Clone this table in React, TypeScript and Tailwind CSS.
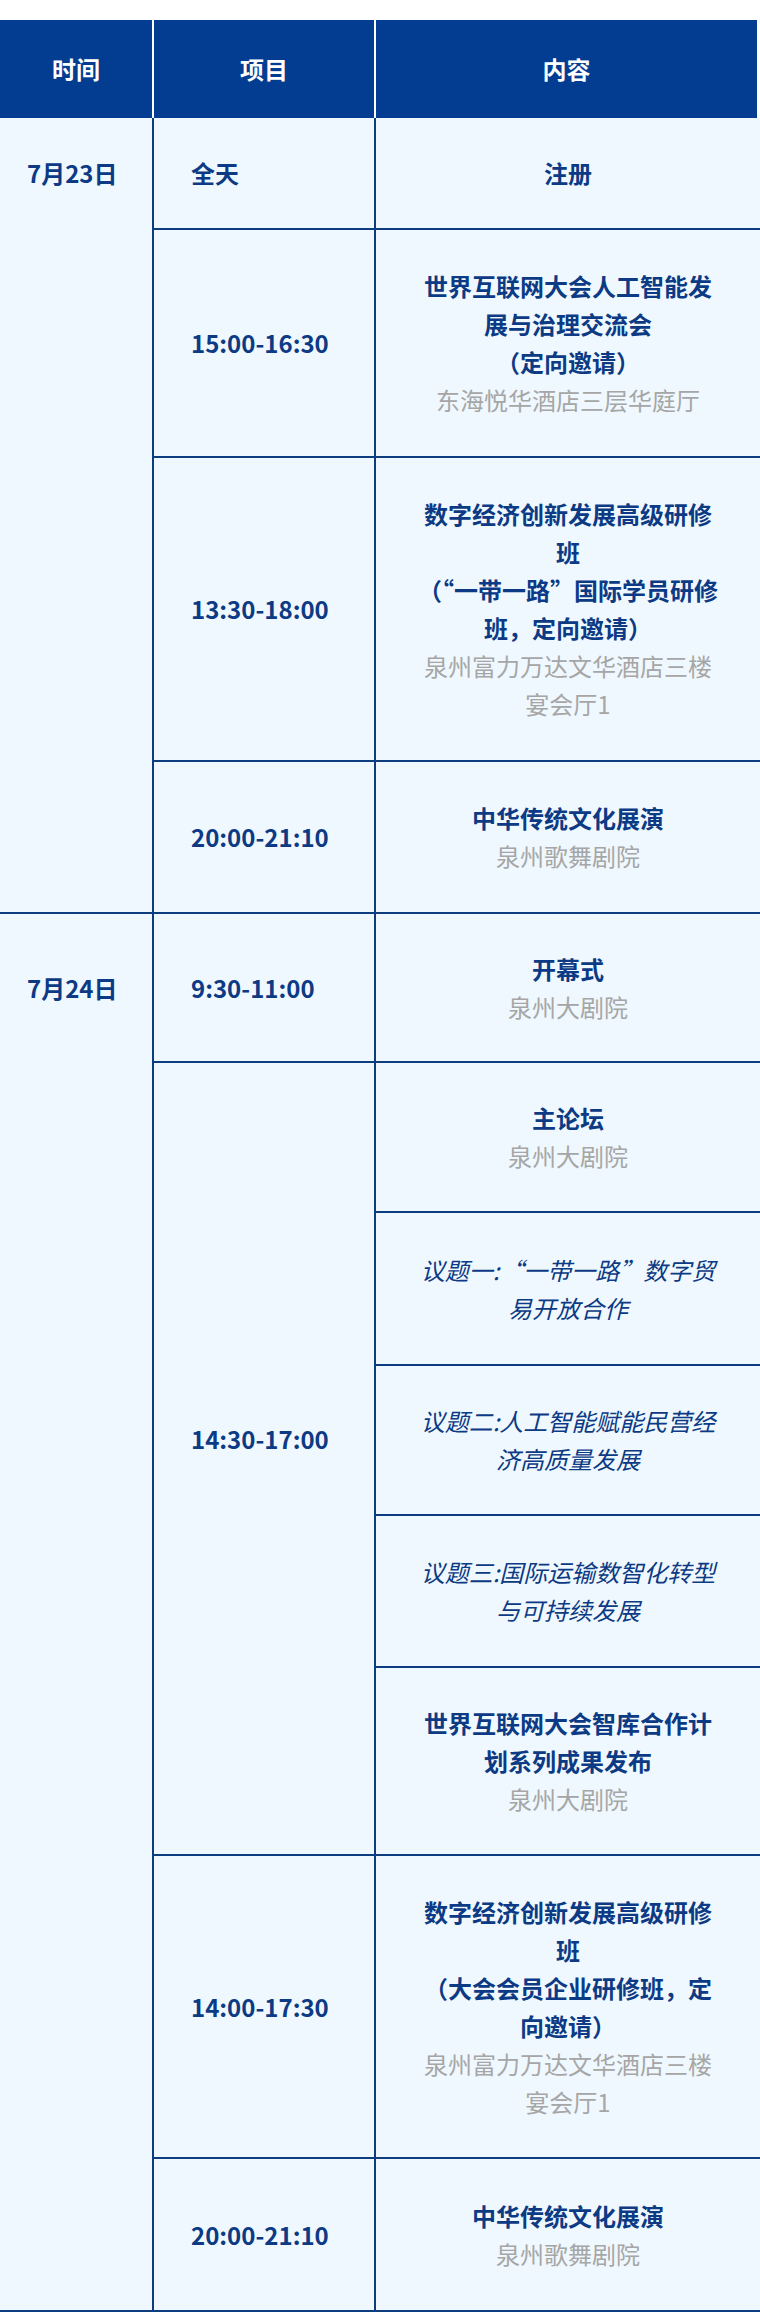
import React from "react";

type Kind = "b" | "g" | "i";
type Line = [Kind, string];

interface Sub {
  h: number;
  lines: Line[];
}

interface Row {
  h: number;
  time: string;
  timePb?: number;
  subs: Sub[];
}

interface Day {
  date: string;
  firstH: number;
  rows: Row[];
}

const days: Day[] = [
  {
    date: "7月23日",
    firstH: 110,
    rows: [
      { h: 112, time: "全天", subs: [{ h: 110, lines: [["b", "注册"]] }] },
      {
        h: 228,
        time: "15:00-16:30",
        subs: [
          {
            h: 226,
            lines: [
              ["b", "世界互联网大会人工智能发"],
              ["b", "展与治理交流会"],
              ["b", "（定向邀请）"],
              ["g", "东海悦华酒店三层华庭厅"],
            ],
          },
        ],
      },
      {
        h: 304,
        time: "13:30-18:00",
        subs: [
          {
            h: 302,
            lines: [
              ["b", "数字经济创新发展高级研修"],
              ["b", "班"],
              ["b", "（“一带一路”国际学员研修"],
              ["b", "班，定向邀请）"],
              ["g", "泉州富力万达文华酒店三楼"],
              ["g", "宴会厅1"],
            ],
          },
        ],
      },
      {
        h: 150,
        time: "20:00-21:10",
        subs: [
          {
            h: 150,
            lines: [
              ["b", "中华传统文化展演"],
              ["g", "泉州歌舞剧院"],
            ],
          },
        ],
      },
    ],
  },
  {
    date: "7月24日",
    firstH: 147,
    rows: [
      {
        h: 149,
        time: "9:30-11:00",
        subs: [
          {
            h: 147,
            lines: [
              ["b", "开幕式"],
              ["g", "泉州大剧院"],
            ],
          },
        ],
      },
      {
        h: 793,
        time: "14:30-17:00",
        timePb: 40,
        subs: [
          {
            h: 150,
            lines: [
              ["b", "主论坛"],
              ["g", "泉州大剧院"],
            ],
          },
          {
            h: 153,
            lines: [
              ["i", "议题一:“一带一路”数字贸"],
              ["i", "易开放合作"],
            ],
          },
          {
            h: 150,
            lines: [
              ["i", "议题二:人工智能赋能民营经"],
              ["i", "济高质量发展"],
            ],
          },
          {
            h: 152,
            lines: [
              ["i", "议题三:国际运输数智化转型"],
              ["i", "与可持续发展"],
            ],
          },
          {
            h: 186,
            lines: [
              ["b", "世界互联网大会智库合作计"],
              ["b", "划系列成果发布"],
              ["g", "泉州大剧院"],
            ],
          },
        ],
      },
      {
        h: 303,
        time: "14:00-17:30",
        subs: [
          {
            h: 301,
            lines: [
              ["b", "数字经济创新发展高级研修"],
              ["b", "班"],
              ["b", "（大会会员企业研修班，定"],
              ["b", "向邀请）"],
              ["g", "泉州富力万达文华酒店三楼"],
              ["g", "宴会厅1"],
            ],
          },
        ],
      },
      {
        h: 151,
        time: "20:00-21:10",
        subs: [
          {
            h: 151,
            lines: [
              ["b", "中华传统文化展演"],
              ["g", "泉州歌舞剧院"],
            ],
          },
        ],
      },
    ],
  },
];

function TextLine({ line }: { line: Line }) {
  const [k, t] = line;
  if (k === "b")
    return <div className="whitespace-nowrap font-bold text-[#0c3a84]">{t}</div>;
  if (k === "i")
    return <div className="whitespace-nowrap italic text-[#0c3a84]">{t}</div>;
  return <div className="whitespace-nowrap text-[#a6a6a6]">{t}</div>;
}

export default function App() {
  return (
    <div className="w-[760px] bg-white pt-[20px] font-['Noto_Sans_CJK_SC','Noto_Sans',sans-serif] text-[24px] leading-[38px]">
      <div className="flex h-[98px] w-[757px] bg-[#033d91] font-bold text-white">
        <div className="flex w-[152px] shrink-0 items-center justify-center">时间</div>
        <div className="flex w-[222px] shrink-0 items-center justify-center border-l-2 border-white">项目</div>
        <div className="flex flex-1 items-center justify-center border-l-2 border-white">内容</div>
      </div>
      <div className="bg-[#eff8fe]">
        {days.map((d, di) => (
          <div key={di} className="flex border-b-2 border-[#0e3d7f]">
            <div className="w-[152px] shrink-0">
              <div
                className="flex items-center pl-[27px] font-bold text-[#0c3a84]"
                style={{ height: d.firstH }}
              >
                {d.date}
              </div>
            </div>
            <div className="flex flex-1 flex-col border-l-2 border-[#0e3d7f]">
              {d.rows.map((r, ri) => {
                const last = ri === d.rows.length - 1;
                return (
                  <div
                    key={ri}
                    className={last ? "flex" : "flex border-b-2 border-[#0e3d7f]"}
                    style={{ height: r.h }}
                  >
                    <div
                      className="flex w-[222px] shrink-0 items-center border-r-2 border-[#0e3d7f] pl-[37px] font-bold text-[#0c3a84]"
                      style={{ paddingBottom: r.timePb ?? 0 }}
                    >
                      {r.time}
                    </div>
                    <div className="flex flex-1 flex-col">
                      {r.subs.map((s, si) => {
                        const sLast = si === r.subs.length - 1;
                        return (
                          <div
                            key={si}
                            className={
                              sLast
                                ? "flex flex-1 flex-col items-center justify-center text-center"
                                : "flex flex-col items-center justify-center border-b-2 border-[#0e3d7f] text-center"
                            }
                            style={sLast ? undefined : { height: s.h }}
                          >
                            {s.lines.map((l, li) => (
                              <TextLine key={li} line={l} />
                            ))}
                          </div>
                        );
                      })}
                    </div>
                  </div>
                );
              })}
            </div>
          </div>
        ))}
      </div>
    </div>
  );
}
